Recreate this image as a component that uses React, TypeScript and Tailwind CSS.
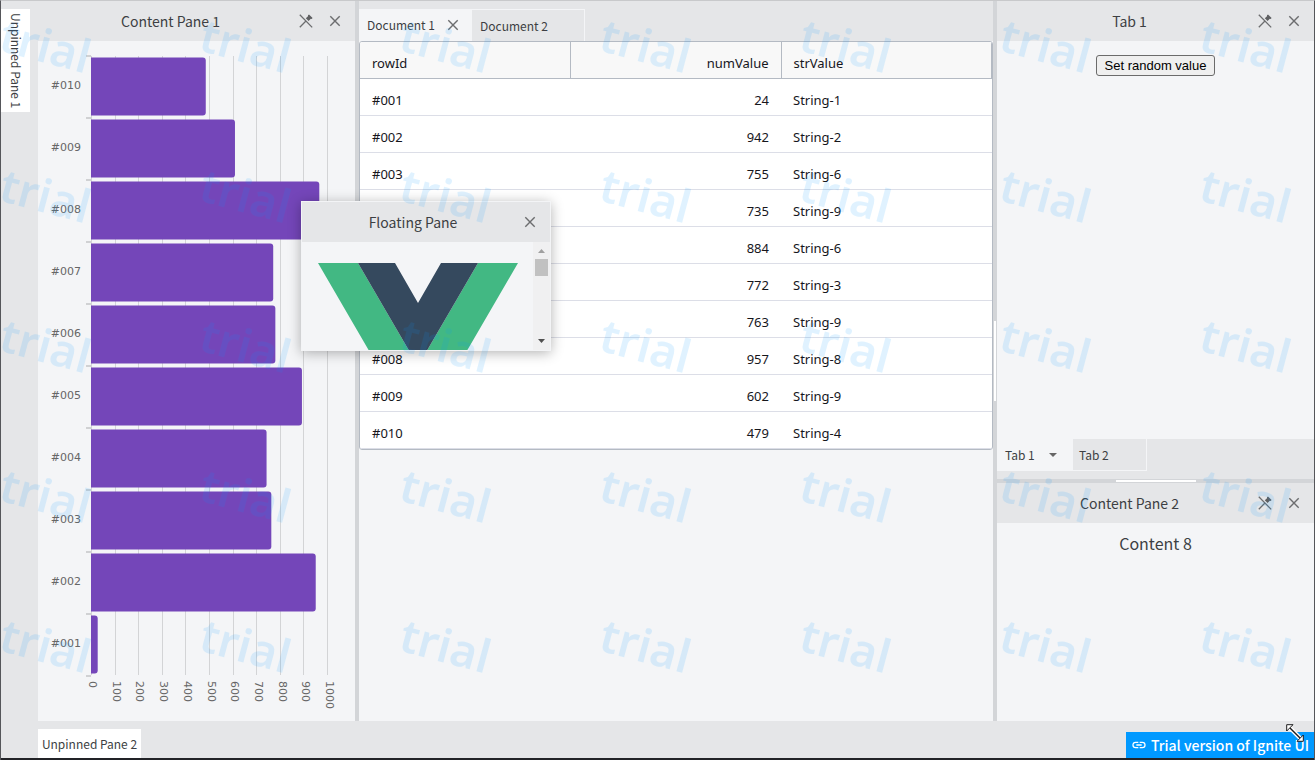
import React from "react";

const rows = [
  { id: "#001", num: 24, str: "String-1" },
  { id: "#002", num: 942, str: "String-2" },
  { id: "#003", num: 755, str: "String-6" },
  { id: "#004", num: 735, str: "String-9" },
  { id: "#005", num: 884, str: "String-6" },
  { id: "#006", num: 772, str: "String-3" },
  { id: "#007", num: 763, str: "String-9" },
  { id: "#008", num: 957, str: "String-8" },
  { id: "#009", num: 602, str: "String-9" },
  { id: "#010", num: 479, str: "String-4" },
];

const ticks = [0, 100, 200, 300, 400, 500, 600, 700, 800, 900, 1000];

function CloseIcon() {
  return (
    <svg width="12" height="12" viewBox="0 0 12 12" fill="none" stroke="#6c6d6f" strokeWidth="1.4" aria-hidden="true">
      <path d="M1.3 1.3 10.7 10.7M10.7 1.3 1.3 10.7" />
    </svg>
  );
}

function PinIcon() {
  return (
    <svg width="14" height="14" viewBox="0 0 14 14" aria-hidden="true">
      <path d="M10 .4 13.6 3.9 12.7 4.9 11.8 4.8 9.6 7 6.8 4.2 9 2.2 9 1.3Z" fill="#5f6062" />
      <path d="M.8 .8 13.2 13.4M7.2 6.8 .8 13.2" fill="none" stroke="#6c6d6f" strokeWidth="1.3" />
    </svg>
  );
}

function PaneHeader({ title, pinnable = true }: { title: string; pinnable?: boolean }) {
  return (
    <header className={pinnable ? "flex h-10 shrink-0 items-center bg-[#e5e6e8] pr-[14px] pl-1" : "flex h-10 shrink-0 items-center bg-[#e5e6e8] pr-[14px]"}>
      <h2 className="flex-1 text-center text-sm leading-6">{title}</h2>
      <div className="flex items-center gap-4">
        {pinnable && (
          <button type="button" aria-label={"Unpin " + title}>
            <PinIcon />
          </button>
        )}
        <button type="button" aria-label={"Close " + title}>
          <CloseIcon />
        </button>
      </div>
    </header>
  );
}

function BarChart() {
  return (
    <svg className="block h-[680px] w-[317px]" viewBox="38 41 317 680" role="img" aria-label="numValue by rowId" fontFamily="'DejaVu Sans', sans-serif" fontSize="11" fill="#666">
      {ticks.map((t, i) => (
        <g key={t}>
          <rect x={Math.round(91 + i * 23.6)} y="56" width="1" height="619" fill="#d3d4d6" />
          <text transform={`translate(${Math.round(89 + i * 23.7)} 681) rotate(90)`}>{t}</text>
        </g>
      ))}
      {Array.from({ length: 11 }, (_, i) => (
        <rect key={i} x="86" y={55 + i * 62} width="5" height="2" fill="#d0d1d3" />
      ))}
      {[...rows].reverse().map((r, i) => {
        const right = 92 + r.num * 0.2375;
        const top = 57.5 + i * 62;
        return (
          <g key={r.id}>
            <path d={`M91 ${top}H${right - 3}q3 0 3 3v52q0 3 -3 3H91Z`} fill="#7446b9" />
            <text x="81" y={top + 31.5} textAnchor="end">{r.id}</text>
          </g>
        );
      })}
    </svg>
  );
}

function Grid() {
  return (
    <div className="overflow-hidden rounded-[3px] border border-[#b4bac3] bg-white">
      <table className="w-full table-fixed border-collapse font-['Noto_Sans',sans-serif] text-[13px] leading-5 text-[#16161c]">
        <colgroup>
          <col className="w-1/3" />
          <col className="w-1/3" />
          <col className="w-1/3" />
        </colgroup>
        <thead className="bg-[#f8f8f8]">
          <tr className="h-9 border-b border-[#b4bac3]">
            <th className="border-r border-[#b4bac3] px-3 pt-1.5 text-left font-normal">rowId</th>
            <th className="border-r border-[#b4bac3] px-3 pt-1.5 text-right font-normal">numValue</th>
            <th className="border-r border-[#b4bac3] px-3 pt-1.5 text-left font-normal">strValue</th>
          </tr>
        </thead>
        <tbody>
          {rows.map((r) => (
            <tr key={r.id} className="h-[37px] border-b border-[#dcdee7]">
              <td className="px-3 pt-1.5">{r.id}</td>
              <td className="px-3 pt-1.5 text-right">{r.num}</td>
              <td className="px-3 pt-1.5">{r.str}</td>
            </tr>
          ))}
        </tbody>
      </table>
    </div>
  );
}

function FloatingPane() {
  return (
    <section className="absolute top-[200px] left-[300px] flex h-[150px] w-[250px] flex-col border border-[#f3f4f6] bg-[#f4f5f7] shadow-[0_2px_12px_rgba(0,0,0,0.3)]">
      <PaneHeader title="Floating Pane" pinnable={false} />
      <div className="flex min-h-0 flex-1">
        <div className="min-w-0 flex-1 overflow-hidden pt-5 pl-4">
          <svg width="200" height="173" viewBox="0 0 200 173" role="img" aria-label="Vue logo">
            <path d="M0 1H40L100 104 160 1H200L100 173Z" fill="#42b883" />
            <path d="M40 1H77L100 41 123 1H160L100 104Z" fill="#35495e" />
          </svg>
        </div>
        <div className="flex w-[17px] flex-col items-center bg-[#f0f0f1]">
          <svg width="17" height="17" viewBox="0 0 17 17" aria-hidden="true"><path d="M5 11 8.5 7 12 11Z" fill="#a0a0a0" /></svg>
          <div className="h-[17px] w-[13px] bg-[#c1c1c1]" />
          <svg className="mt-auto" width="17" height="17" viewBox="0 0 17 17" aria-hidden="true"><path d="M5 6 8.5 10 12 6Z" fill="#505050" /></svg>
        </div>
      </div>
    </section>
  );
}

function Watermark() {
  return (
    <svg className="pointer-events-none absolute inset-0 h-full w-full" aria-hidden="true">
      <defs>
        <pattern id="trial" x="-20" y="-10" width="200" height="150" patternUnits="userSpaceOnUse">
          <text transform="translate(16 59) rotate(15)" fontFamily="'Noto Sans', sans-serif" fontSize="46" fontWeight="600" fill="#0099ff" fillOpacity="0.12">trial</text>
        </pattern>
      </defs>
      <rect width="100%" height="100%" fill="url(#trial)" />
    </svg>
  );
}

export default function App() {
  return (
    <div className="relative flex min-h-screen flex-col overflow-hidden border-x border-t border-x-[#55565a] border-t-[#c8c9cb] bg-[#e5e6e8] font-['Noto_Sans_CJK_SC',sans-serif] text-[#3d3f43]">
      <main className="flex flex-1">
        <nav className="w-[37px] shrink-0 pt-2">
          <button type="button" className="flex h-[103px] w-[29px] items-center justify-center bg-white text-xs leading-5 whitespace-nowrap [writing-mode:vertical-rl]">Unpinned Pane 1</button>
        </nav>
        <section className="w-[317px] shrink-0 bg-[#f4f5f7]">
          <PaneHeader title="Content Pane 1" />
          <BarChart />
        </section>
        <div className="w-1 shrink-0 bg-[#d3d5d8]" />
        <section className="min-w-0 flex-1 bg-[#f4f5f7]">
          <div className="flex h-10 items-end bg-[#e5e6e8] text-xs leading-5">
            <div className="flex h-8 w-[113px] items-center gap-3 bg-[#f4f5f7] pl-2">
              <button type="button">Document 1</button>
              <button type="button" aria-label="Close Document 1"><CloseIcon /></button>
            </div>
            <button type="button" className="h-8 w-[113px] border-t border-r border-[#f4f5f7] pl-2 text-left">Document 2</button>
          </div>
          <Grid />
        </section>
        <div className="flex w-1 shrink-0 items-center bg-[#d3d5d8]">
          <div className="ml-px h-20 w-0.5 bg-white" />
        </div>
        <div className="flex w-[317px] shrink-0 flex-col bg-[#f4f5f7]">
          <section className="flex flex-1 flex-col">
            <PaneHeader title="Tab 1" />
            <div className="flex flex-1 items-start justify-center pt-[14px]">
              <button type="button" className="h-[21px] rounded-[3px] border border-[#6b6b6b] bg-[#efefef] px-2 font-['Liberation_Sans',sans-serif] text-[13px] leading-4 text-black">Set random value</button>
            </div>
            <div className="flex h-10 items-start bg-[#e5e6e8] text-xs leading-5">
              <button type="button" className="flex h-8 w-[76px] items-center gap-[14px] bg-[#f4f5f7] pl-2">
                Tab 1
                <svg width="8" height="4" viewBox="0 0 8 4" aria-hidden="true"><path d="M0 0H8L4 4Z" fill="#666" /></svg>
              </button>
              <button type="button" className="h-8 w-[74px] border-r border-b border-[#f4f5f7] pl-1.5 text-left">Tab 2</button>
            </div>
          </section>
          <div className="flex h-1 justify-center bg-[#d3d5d8]">
            <div className="mt-px h-0.5 w-20 bg-white" />
          </div>
          <section className="h-[238px]">
            <PaneHeader title="Content Pane 2" />
            <p className="pt-2 text-center text-base leading-6">Content 8</p>
          </section>
        </div>
      </main>
      <footer className="flex h-[39px] items-end border-b-2 border-[#222327] pl-[37px]">
        <button type="button" className="h-[29px] w-[103px] bg-white text-xs leading-5 whitespace-nowrap">Unpinned Pane 2</button>
      </footer>
      <FloatingPane />
      <Watermark />
      <a href="#trial-info" className="absolute right-0 bottom-[2px] flex h-[26px] items-center gap-1 bg-[#0099ff] px-[5px] text-sm leading-5 font-medium whitespace-nowrap text-white">
        <svg width="16" height="16" viewBox="0 0 24 24" fill="currentColor" aria-hidden="true">
          <path d="M3.9 12c0-1.7 1.4-3.1 3.1-3.1h4V7H7a5 5 0 0 0 0 10h4v-1.9H7A3.1 3.1 0 0 1 3.9 12zM8 13h8v-2H8v2zm9-6h-4v1.9h4a3.1 3.1 0 0 1 0 6.2h-4V17h4a5 5 0 0 0 0-10z" />
        </svg>
        Trial version of Ignite UI
      </a>
      <svg className="pointer-events-none absolute right-[10px] bottom-[18px]" width="18" height="18" viewBox="0 0 18 18" aria-hidden="true">
        <path d="M4 4 14 14" stroke="#fff" strokeWidth="4" />
        <path d="M.7 .7H7L.7 7ZM17.3 17.3V11L11 17.3Z" fill="#fff" stroke="#1d1d1f" />
        <path d="M4 4 14 14" stroke="#1d1d1f" strokeWidth="1.4" />
      </svg>
    </div>
  );
}
